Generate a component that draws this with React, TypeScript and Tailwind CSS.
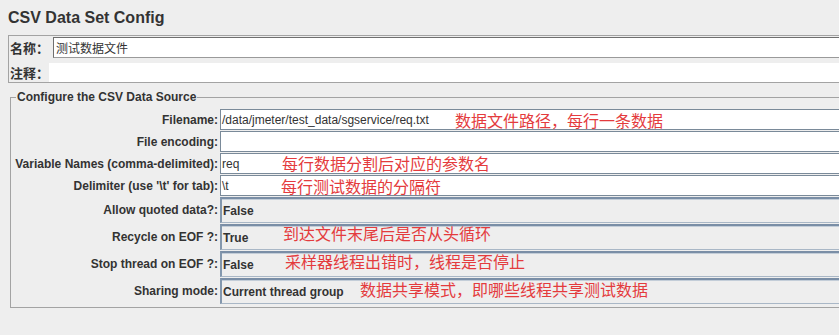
import React from "react";

const font = "font-['Liberation_Sans','Noto_Sans_CJK_SC',sans-serif]";
const cjk = "font-['Noto_Sans_CJK_SC',sans-serif]";

type Row = {
  label: string;
  value: string;
  kind: "text" | "combo";
  note?: string;
  noteLeft?: string;
  noteTop?: string;
};

const rows: Row[] = [
  {
    label: "Filename:",
    value: "/data/jmeter/test_data/sgservice/req.txt",
    kind: "text",
    note: "数据文件路径，每行一条数据",
    noteLeft: "left-[444px]",
    noteTop: "top-[3px]",
  },
  { label: "File encoding:", value: "", kind: "text" },
  {
    label: "Variable Names (comma-delimited):",
    value: "req",
    kind: "text",
    note: "每行数据分割后对应的参数名",
    noteLeft: "left-[271px]",
    noteTop: "top-[2px]",
  },
  {
    label: "Delimiter (use '\\t' for tab):",
    value: "\\t",
    kind: "text",
    note: "每行测试数据的分隔符",
    noteLeft: "left-[270px]",
    noteTop: "top-[3px]",
  },
  { label: "Allow quoted data?:", value: "False", kind: "combo" },
  {
    label: "Recycle on EOF ?:",
    value: "True",
    kind: "combo",
    note: "到达文件末尾后是否从头循环",
    noteLeft: "left-[272px]",
    noteTop: "top-[1px]",
  },
  {
    label: "Stop thread on EOF ?:",
    value: "False",
    kind: "combo",
    note: "采样器线程出错时，线程是否停止",
    noteLeft: "left-[274px]",
    noteTop: "top-[2px]",
  },
  {
    label: "Sharing mode:",
    value: "Current thread group",
    kind: "combo",
    note: "数据共享模式，即哪些线程共享测试数据",
    noteLeft: "left-[349px]",
    noteTop: "top-[3px]",
  },
];

function FieldRow({ row }: { row: Row }) {
  const isText = row.kind === "text";
  return (
    <div
      className={`relative flex items-stretch ${
        isText ? "h-[21px] mb-[1px]" : "h-[26px] mb-[1px]"
      }`}
    >
      <div className="flex w-[209px] shrink-0 items-center justify-end pr-[2px] text-[12px] font-bold text-[#333333]">
        {row.label}
      </div>
      {isText ? (
        <div className="flex flex-1 items-center border border-[#7a8a99] bg-white pl-[1px] text-[12px] text-[#333333]">
          {row.value}
        </div>
      ) : (
        <div className="flex flex-1 items-center border-t-2 border-l-2 border-b border-t-[#7a8ea6] border-l-[#8397ad] border-b-[#a9b7c6] bg-[#eeeeee] pl-[1px] text-[12px] font-bold text-[#333333] shadow-[inset_0_1px_0_#c3cdd8]">
          {row.value}
        </div>
      )}
      {row.note && (
        <span
          className={`absolute ${row.noteLeft} ${row.noteTop} ${cjk} whitespace-nowrap text-[16px] leading-[16px] text-[#e43b3d]`}
        >
          {row.note}
        </span>
      )}
    </div>
  );
}

export default function App() {
  return (
    <div className={`h-[335px] w-[839px] overflow-hidden bg-[#eeeeee] ${font}`}>
      <h1 className="pl-[8px] pt-[8px] text-[16px] font-bold leading-[20px] text-[#333333]">
        CSV Data Set Config
      </h1>

      <div className="ml-[8px] mt-[7px] h-[48px] w-[900px] border border-[#a3a3a3]">
        <div className="mt-[1px] flex h-[21px]">
          <div className={`flex w-[44px] items-center pl-[1px] ${cjk} text-[13px] font-bold text-[#333333]`}>
            名称：
          </div>
          <div className={`flex flex-1 items-center border-t border-l border-b border-t-[#6f6f6f] border-l-[#6f6f6f] border-b-[#9a9a9a] bg-white pl-[2px] ${cjk} text-[12px] text-[#333333]`}>
            测试数据文件
          </div>
        </div>
        <div className="mt-[5px] flex h-[19px]">
          <div className={`flex w-[40px] items-center pl-[1px] ${cjk} text-[13px] font-bold text-[#333333]`}>
            注释：
          </div>
          <div className="flex-1 bg-white" />
        </div>
      </div>

      <fieldset className="ml-[10px] mt-[7px] w-[900px] border border-[#a3a3a3] pb-[2px]">
        <legend className="ml-[5px] px-[1px] text-[12px] font-bold leading-[15px] text-[#333333]">
          Configure the CSV Data Source
        </legend>
        <div className="pt-[4px]">
          {rows.map((r) => (
            <FieldRow key={r.label} row={r} />
          ))}
        </div>
      </fieldset>
    </div>
  );
}
